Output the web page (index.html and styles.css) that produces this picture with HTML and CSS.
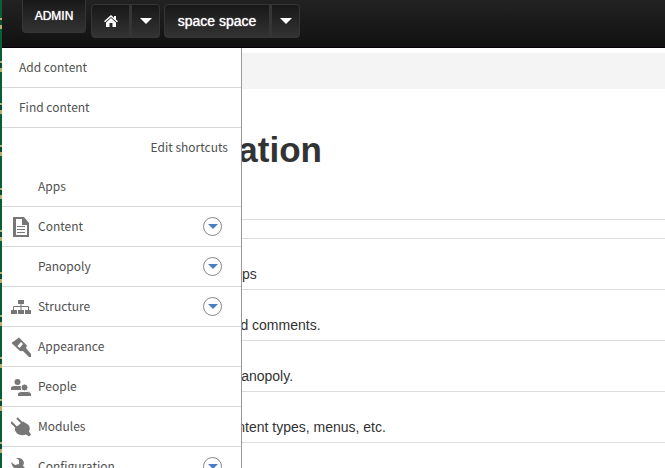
FILE: index.html
```html
<!DOCTYPE html>
<html lang="en">
<head>
<meta charset="utf-8">
<title>Administration</title>
<link rel="stylesheet" href="styles.css">
</head>
<body>
<header class="bar">
  <button class="btn admin" type="button">ADMIN</button>
  <div class="group">
    <a class="btn home" href="#" aria-label="Home"><svg width="14" height="12" viewBox="0 0 14 12"><path fill="#fff" d="M7 0 10 2.700V1h2v3.500L14 6.300 13 7.300 7 2 1 7.300 0 6.300zM7 3l5 4.400V12H8.500V8h-3v4H2V7.400z"/></svg></a>
    <button class="btn drop" type="button" aria-label="Home menu"><i class="caret"></i></button>
  </div>
  <div class="group">
    <a class="btn space" href="#">space space</a>
    <button class="btn drop" type="button" aria-label="Space menu"><i class="caret"></i></button>
  </div>
</header>
<div class="body">
  <main class="main">
    <div class="crumbs"></div>
    <h1>Administration</h1>
    <ul class="list">
      <li>Manage and install apps</li>
      <li>Administer content and comments.</li>
      <li>Manage settings for Panopoly.</li>
      <li>Administer blocks, content types, menus, etc.</li>
    </ul>
  </main>
  <nav class="drawer">
    <ul class="shortcuts">
      <li><a href="#">Add content</a></li>
      <li><a href="#">Find content</a></li>
      <li class="edit"><a href="#">Edit shortcuts</a></li>
    </ul>
    <ul class="menu">
      <li><span class="icon"></span><a href="#">Apps</a></li>
      <li><span class="icon"><svg width="20" height="20" viewBox="0 0 20 20"><path fill="#777" fill-rule="evenodd" d="M2 0h11l5 6v14H2zM5 2v16h11V8h-5V2z"/><path stroke="#777" d="M6 9.500h8M6 12.500h8M6 15.500h8"/></svg></span><a href="#">Content</a><button class="more" type="button" aria-label="Open Content"><i></i></button></li>
      <li><span class="icon"></span><a href="#">Panopoly</a><button class="more" type="button" aria-label="Open Panopoly"><i></i></button></li>
      <li><span class="icon"><svg width="20" height="20" viewBox="0 0 20 20"><path fill="#777" d="M7 3h6v4H7zM0 13h6v4H0zM7 13h6v4H7zM14 13h6v4h-6z"/><path fill="none" stroke="#777" d="M10 7v6M2.500 13v-3.500h15V13"/></svg></span><a href="#">Structure</a><button class="more" type="button" aria-label="Open Structure"><i></i></button></li>
      <li><span class="icon"><svg width="20" height="20" viewBox="0 0 20 20"><path fill="#777" d="M8 .500 16 8.500 15 11l5 6v3h-2l-6-6-3 0L.500 6z"/><path fill="#fff" d="M10 5 12 7 8.500 11 6.500 9z"/></svg></span><a href="#">Appearance</a></li>
      <li><span class="icon"><svg width="20" height="20" viewBox="0 0 20 20"><g fill="#777"><circle cx="6.500" cy="5" r="3"/><path d="M0 13v-2q0-2 3-2h7l1 4z"/></g><g fill="#777" stroke="#fff"><circle cx="13.500" cy="10.500" r="3.500"/><path d="M6.500 19.500V17q0-2.500 4-2.500h6q4 0 4 2.500v2.500z"/></g></svg></span><a href="#">People</a></li>
      <li><span class="icon"><svg width="20" height="20" viewBox="0 0 20 20"><path fill="#777" d="M4 11 12 4.500l5 3q3 3 1 7l2 3-2 2-3-2q-5 2-9-1l-2-3z"/><path stroke="#777" stroke-width="2" d="m6 1 6 6M0 5l7 7"/></svg></span><a href="#">Modules</a></li>
      <li><span class="icon"><svg width="20" height="20" viewBox="0 0 20 20"><path fill="#777" d="M7 1q5 0 6 5l-1 3 8 8-3 3-8-8q-6 1-8-4L0 5l4 3 4-1V3L5 1z"/></svg></span><a href="#">Configuration</a><button class="more" type="button" aria-label="Open Configuration"><i></i></button></li>
    </ul>
  </nav>
</div>
</body>
</html>
```
FILE: styles.css
```css
* { box-sizing: border-box; }
html { height: 100%; overflow: hidden; background: #fff; }
body {
  margin: 0;
  height: 100%;
  overflow: hidden;
  border-left: 2px solid #08603a;
  border-image: repeating-linear-gradient(#08603a 0 20px, #b5ad6a 20px 22px, #075033 22px 27px, #b5ad6a 27px 31px, #08603a 31px 42px) 2;
  border-width: 0 0 0 2px;
  font: 14px/20px "Liberation Sans", Arial, sans-serif;
  color: #333;
}
a { color: inherit; text-decoration: none; }
ul { margin: 0; padding: 0; list-style: none; }

.bar {
  display: flex;
  align-items: flex-start;
  height: 48px;
  padding-left: 20px;
  background: linear-gradient(#222, #111);
  border-bottom: 1px solid #080008;
}
.btn {
  display: flex;
  align-items: center;
  justify-content: center;
  height: 34px;
  padding: 0;
  border: 1px solid #363636;
  border-radius: 4px;
  background: linear-gradient(#181818, #333);
  color: #fff;
  font: 14px/20px "Liberation Sans", Arial, sans-serif;
  text-shadow: 0 0 1px #fff;
}
.admin {
  width: 64px;
  height: 33px;
  margin-right: 5px;
  border-top: 0;
  border-radius: 0 0 4px 4px;
  font-size: 12px;
}
.group { display: flex; margin: 4px 4px 0 0; }
.group .btn:first-child { border-radius: 4px 0 0 4px; }
.home { width: 39px; }
.drop { width: 30px; border-left-width: 2px; border-radius: 0 4px 4px 0; }
.space { width: 106px; }
.caret { border: 6px solid transparent; border-top-color: #fff; border-bottom: 0; }

.body { position: relative; }
.main { padding-top: 5px; }
.crumbs { height: 36px; background: #f4f4f4; }
h1 {
  margin: 40px 0 49px;
  padding-left: 73px;
  font-size: 35px;
  line-height: 41px;
}
.list { border-top: 1px solid #ddd; padding-top: 18px; }
.list li {
  height: 51px;
  padding: 25px 0 0 103px;
  border-top: 1px solid #ddd;
}
.list li:last-child { height: 52px; border-bottom: 1px solid #ddd; }

.drawer {
  position: absolute;
  top: 0;
  left: 0;
  width: 240px;
  background: #fff;
  border-right: 1px solid #999;
  color: #505050;
  font: 12px/20px "Noto Sans CJK SC", "Noto Sans", sans-serif;
}
.drawer a { padding-bottom: 2px; }
.drawer li {
  display: flex;
  align-items: center;
  height: 40px;
  border-bottom: 1px solid #d8d8d8;
}
.shortcuts li { padding: 0 13px 0 17px; }
.shortcuts .edit { justify-content: flex-end; height: 39px; border: 0; }
.menu li { padding: 0 19px 0 9px; }
.icon { width: 20px; height: 20px; margin-right: 7px; }
.icon svg { display: block; }
.more {
  display: flex;
  align-items: center;
  justify-content: center;
  width: 19px;
  height: 19px;
  margin-left: auto;
  padding: 0;
  border: 1px solid #888;
  border-radius: 50%;
  background: #fff;
}
.more i { border: 5px solid transparent; border-top-color: #4a7dc5; border-bottom: 0; }
```
